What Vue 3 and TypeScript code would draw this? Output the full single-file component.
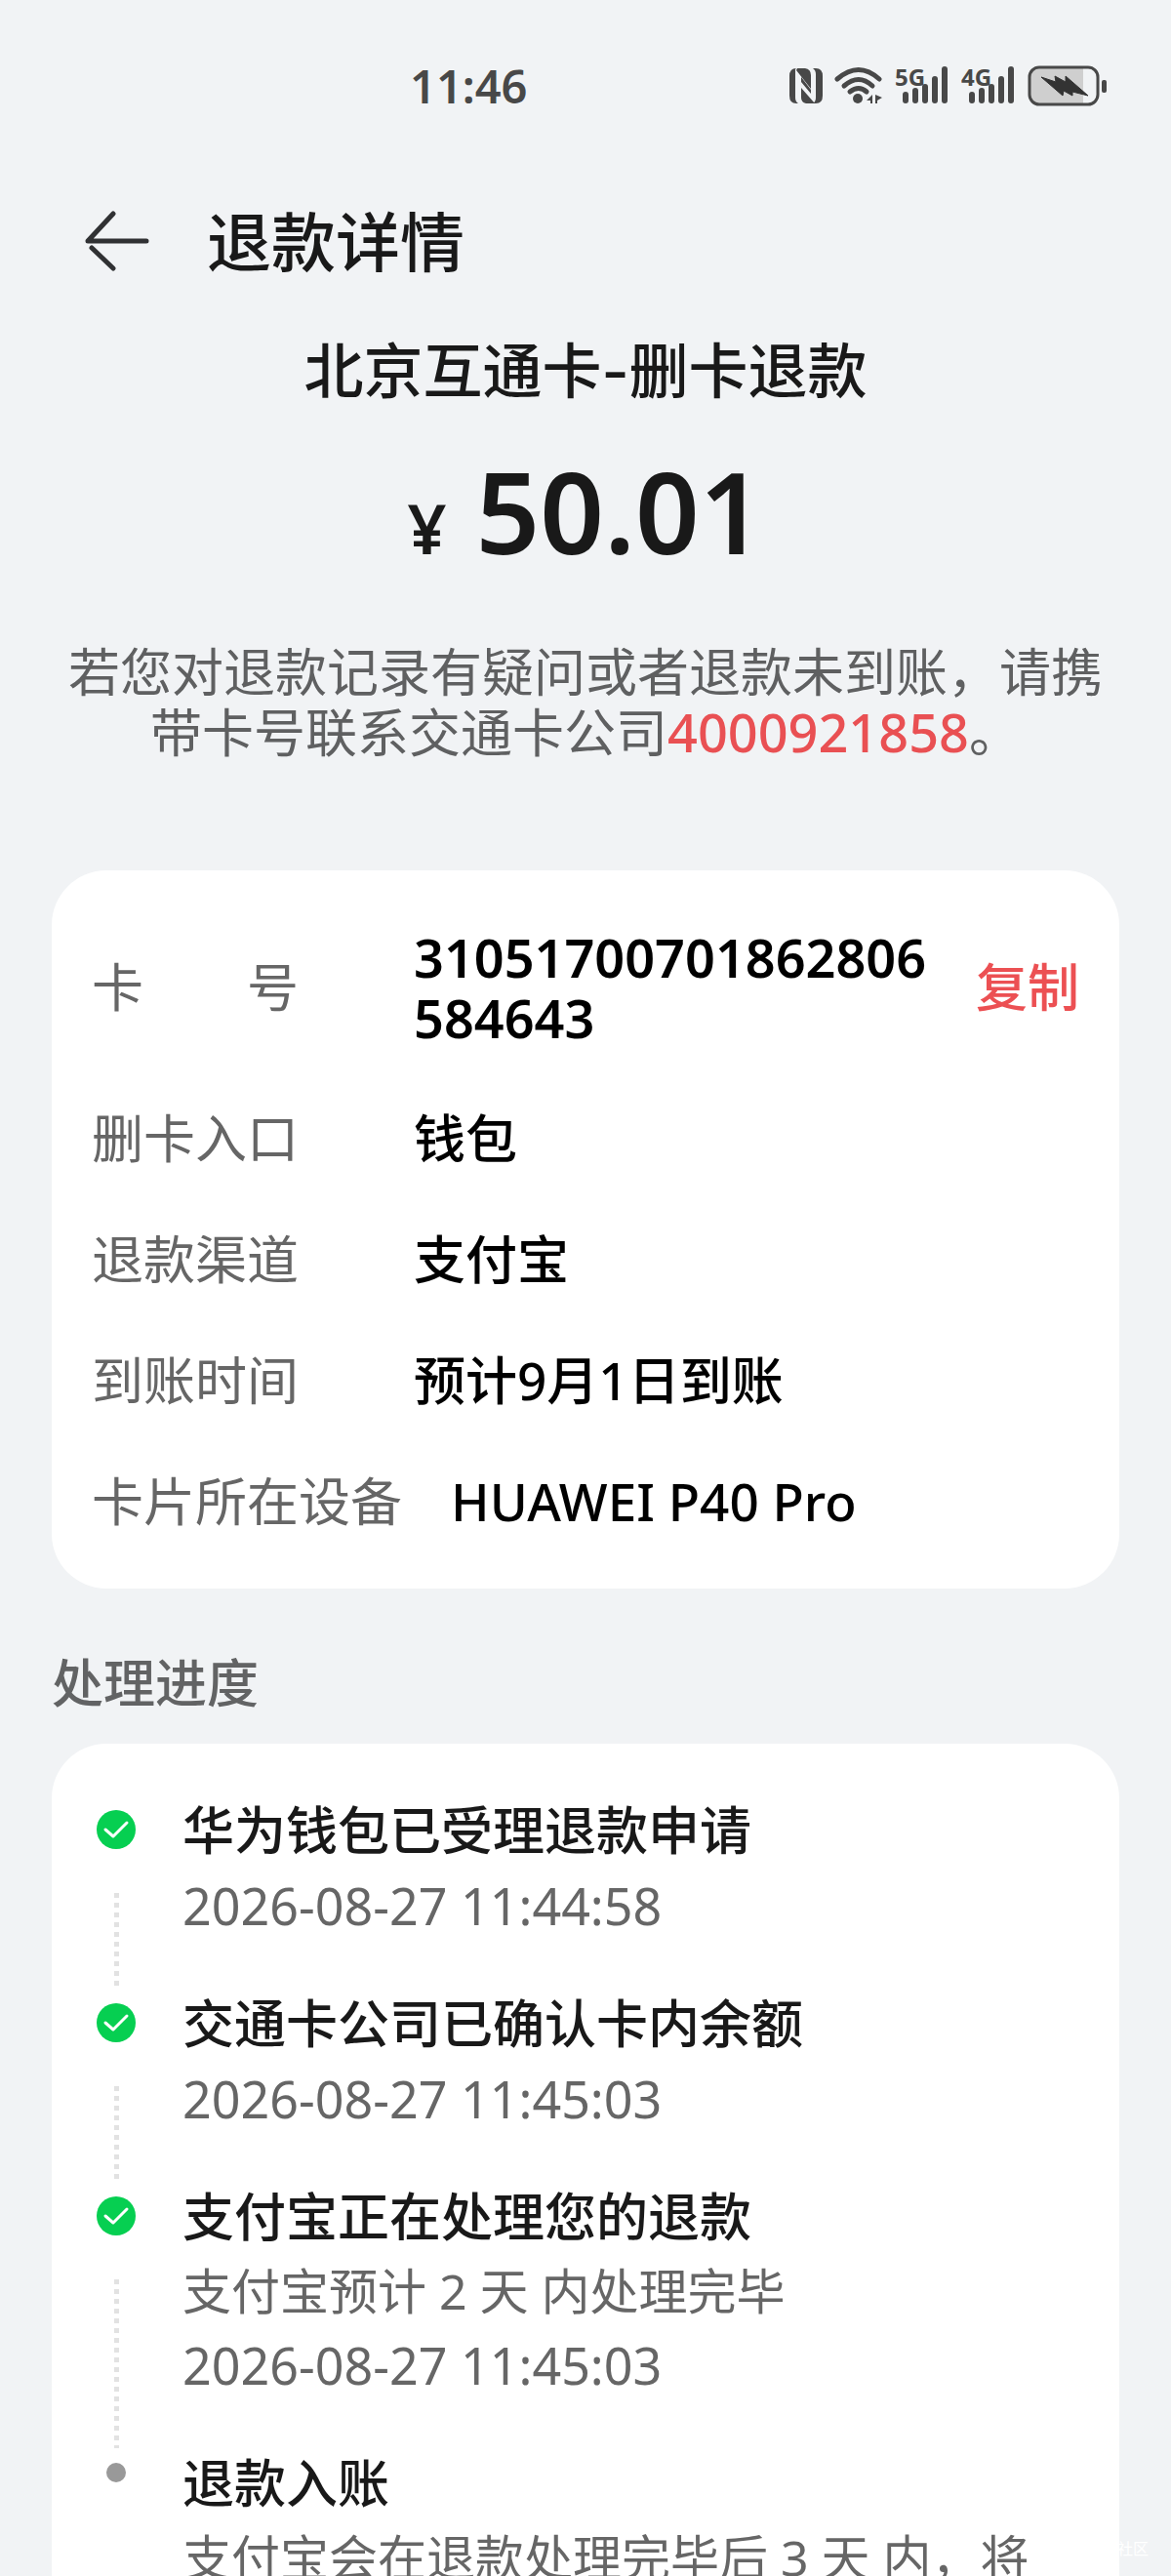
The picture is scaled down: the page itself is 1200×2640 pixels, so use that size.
<script setup lang="ts">
import { ref } from 'vue'

interface Detail {
  label: string
  value: string
  spread?: boolean
  numeric?: boolean
  copyable?: boolean
}

interface Step {
  title: string
  done: boolean
  note?: string
  time?: string
}

const details = ref<Detail[]>([
  { label: '卡 号', value: '31051700701862806584643', spread: true, numeric: true, copyable: true },
  { label: '删卡入口', value: '钱包' },
  { label: '退款渠道', value: '支付宝' },
  { label: '到账时间', value: '预计9月1日到账' },
  { label: '卡片所在设备', value: 'HUAWEI P40 Pro' },
])

const steps = ref<Step[]>([
  { title: '华为钱包已受理退款申请', done: true, time: '2026-08-27 11:44:58' },
  { title: '交通卡公司已确认卡内余额', done: true, time: '2026-08-27 11:45:03' },
  { title: '支付宝正在处理您的退款', done: true, note: '支付宝预计 2 天 内处理完毕', time: '2026-08-27 11:45:03' },
  { title: '退款入账', done: false, note: '支付宝会在退款处理完毕后 3 天 内，将' },
])

const networks = ['5G', '4G']

function copy(text: string) {
  navigator.clipboard?.writeText(text)
}
</script>

<template>
  <div class="screen">
    <div class="status">
      <span class="clock">11:46</span>
      <div class="indicators">
        <svg width="34" height="36" viewBox="0 0 34 36" aria-hidden="true">
          <path d="M8 0H16Q22 1 22 7V21L7 2ZM24 0H27Q34 0 34 8V28Q34 36 27 36H24Q27 34 27 30V6Q27 2 24 0ZM7 0Q0 0 0 8V28Q0 36 7 36H9Q6 34 6 30V1ZM12 9L22 22V26L12 14ZM12 20L26 36H17Q12 35 12 30Z" fill="#484848" />
        </svg>
        <svg width="50" height="40" viewBox="0 0 50 40" aria-hidden="true">
          <g fill="none" stroke="#484848" stroke-width="5" stroke-linecap="round">
            <path d="M3 13Q25 -6 46 13" />
            <path d="M10 20Q25 7 39 20" />
            <path d="M16 26Q25 19 33 26" />
          </g>
          <circle cx="24" cy="33" r="5" fill="#484848" />
          <path d="M39 29V38H37V35H33ZM42 38V29L49 32L44 35V38Z" fill="#484848" />
        </svg>
        <svg v-for="n in networks" :key="n" width="56" height="60" viewBox="0 -10 56 60">
          <text x="0" y="20" class="net">{{ n }}</text>
          <path d="M11 29V35M21 25V35M31 21V35M41 13V35M51 3V35" stroke="#484848" stroke-width="6" stroke-linecap="round" />
        </svg>
        <svg width="82" height="42" viewBox="0 0 82 42" aria-hidden="true">
          <path d="M12 3H57V39H12Q3 39 3 30V12Q3 3 12 3Z" fill="#cfcfcf" />
          <rect x="2" y="2" width="70" height="38" rx="10" fill="none" stroke="#484848" stroke-width="3" />
          <rect x="76" y="15" width="5" height="13" rx="2" fill="#484848" />
          <path d="M14 12L29 17L28 11L39 17V11L62 31L46 27L46 31L37 26L36 31Z" fill="#333" stroke="#333" stroke-width="1" stroke-linejoin="round" />
        </svg>
      </div>
    </div>

    <header class="bar">
      <button class="back" type="button" aria-label="返回">
        <svg width="68" height="62" viewBox="0 0 68 62" fill="none" stroke="#303133" stroke-width="5" stroke-linecap="round" stroke-linejoin="round">
          <path d="M64 31H4L30 3M8 38L30 59" />
        </svg>
      </button>
      <h1>退款详情</h1>
    </header>

    <main>
      <section class="summary">
        <h2>北京互通卡-删卡退款</h2>
        <p class="amount"><span class="currency">¥</span><span>50.01</span></p>
        <p class="hint">若您对退款记录有疑问或者退款未到账，请携带卡号联系交通卡公司<a href="tel:4000921858">4000921858</a>。</p>
      </section>

      <dl class="card details">
        <div v-for="d in details" :key="d.label" class="row">
          <dt><span :class="{ spread: d.spread }">{{ d.label }}</span></dt>
          <dd :class="{ numeric: d.numeric }">{{ d.value }}</dd>
          <dd v-if="d.copyable" class="action"><button class="copy" type="button" @click="copy(d.value)">复制</button></dd>
        </div>
      </dl>

      <h3>处理进度</h3>

      <ol class="card steps">
        <li v-for="(s, i) in steps" :key="s.title">
          <div class="track">
            <svg v-if="s.done" class="check" width="40" height="40" viewBox="0 0 40 40" aria-hidden="true">
              <circle cx="20" cy="20" r="20" fill="#06cf51" />
              <path d="M9 20L17 27L31 13" fill="none" stroke="#fff" stroke-width="3" stroke-linecap="round" stroke-linejoin="round" />
            </svg>
            <span v-else class="dot"></span>
            <span v-if="i < steps.length - 1" class="line"></span>
          </div>
          <div class="body">
            <h4>{{ s.title }}</h4>
            <p v-if="s.note">{{ s.note }}</p>
            <time v-if="s.time">{{ s.time }}</time>
          </div>
        </li>
      </ol>
    </main>

    <span class="mark">社区</span>
  </div>
</template>

<style>
body {
  background: #f1f3f5;
}
</style>

<style scoped>
.screen {
  position: relative;
  height: 100vh;
  overflow: hidden;
  background: #f1f3f5;
  color: #191919;
  font-family: "Noto Sans", "Noto Sans CJK SC", sans-serif;
}

h1, h2, h3, h4, p, dl, dd, ol {
  margin: 0;
  padding: 0;
}

button {
  border: 0;
  padding: 0;
  background: none;
  font-family: inherit;
  cursor: pointer;
}

svg {
  display: block;
}

.status {
  display: flex;
  justify-content: space-between;
  align-items: center;
  height: 180px;
  padding: 0 65px 0 35%;
}

.clock {
  padding-bottom: 4px;
  color: #484848;
  font-size: 47px;
  font-weight: 600;
}

.indicators {
  display: flex;
  align-items: center;
  gap: 12px;
  padding-bottom: 4px;
}

.net {
  fill: #484848;
  font-family: "Liberation Sans Narrow", "Noto Sans", sans-serif;
  font-size: 24px;
  font-weight: 700;
}

.bar {
  display: flex;
  align-items: center;
  gap: 58px;
  height: 134px;
  padding: 0 86px;
}

h1 {
  font-size: 66px;
  font-weight: 500;
  line-height: 80px;
}

main {
  padding: 27px 53px 0;
}

.summary {
  text-align: center;
}

h2 {
  font-family: Inter, "Noto Sans CJK SC", sans-serif;
  font-size: 61px;
  font-weight: 500;
  line-height: 80px;
}

.amount {
  display: flex;
  justify-content: center;
  align-items: baseline;
  gap: 30px;
  margin-top: 43px;
  font-size: 115px;
  font-weight: 600;
  line-height: 120px;
}

.currency {
  font-size: 70px;
  line-height: 70px;
}

.hint {
  margin-top: 74px;
  color: #5f6061;
  font-size: 53px;
  line-height: 62px;
}

.hint a {
  color: #e95053;
  font-size: 54px;
  font-weight: 500;
  line-height: 54px;
  text-decoration: none;
}

.card {
  border-radius: 56px;
  background: #fff;
  padding: 58px 41px;
}

.details {
  display: flex;
  flex-direction: column;
  gap: 62px;
  margin-top: 110px;
  font-size: 53px;
  line-height: 62px;
}

.row {
  display: flex;
  align-items: center;
}

dt {
  flex: none;
  min-width: 280px;
  margin-right: 50px;
  color: #666;
}

.spread {
  display: block;
  width: 4em;
  text-align-last: justify;
}

dd {
  flex: 1;
  color: #000;
  font-weight: 500;
  word-break: break-all;
}

.numeric {
  font-size: 54px;
  font-weight: 600;
}

.action {
  flex: none;
  margin-left: 40px;
}

.copy {
  color: #ec5053;
  font-size: 53px;
  font-weight: 500;
  line-height: 62px;
}

h3 {
  margin: 66px 0 31px;
  color: #626364;
  font-size: 53px;
  font-weight: 500;
  line-height: 62px;
}

.steps {
  list-style: none;
}

.steps li {
  display: flex;
  gap: 43px;
}

.track {
  display: flex;
  flex-direction: column;
  align-items: center;
  width: 50px;
}

.check {
  flex: none;
  margin: 10px 0 45px;
}

.dot {
  width: 20px;
  height: 20px;
  margin-top: 10px;
  border-radius: 50%;
  background: #999;
}

.line {
  flex: 1;
  width: 5px;
  margin-bottom: 5px;
  background: repeating-linear-gradient(#e2e2e2 0 5px, transparent 5px 10px);
}

.body {
  flex: 1;
  padding-bottom: 53px;
}

h4 {
  margin-bottom: 8px;
  font-size: 53px;
  font-weight: 500;
  line-height: 62px;
}

.body p,
.body time {
  display: block;
  color: #666;
  font-size: 50px;
  line-height: 75px;
}

.body time {
  font-size: 52px;
}

.mark {
  position: absolute;
  right: 23px;
  bottom: 16px;
  color: #fff;
  font-size: 16px;
  line-height: 24px;
}
</style>
